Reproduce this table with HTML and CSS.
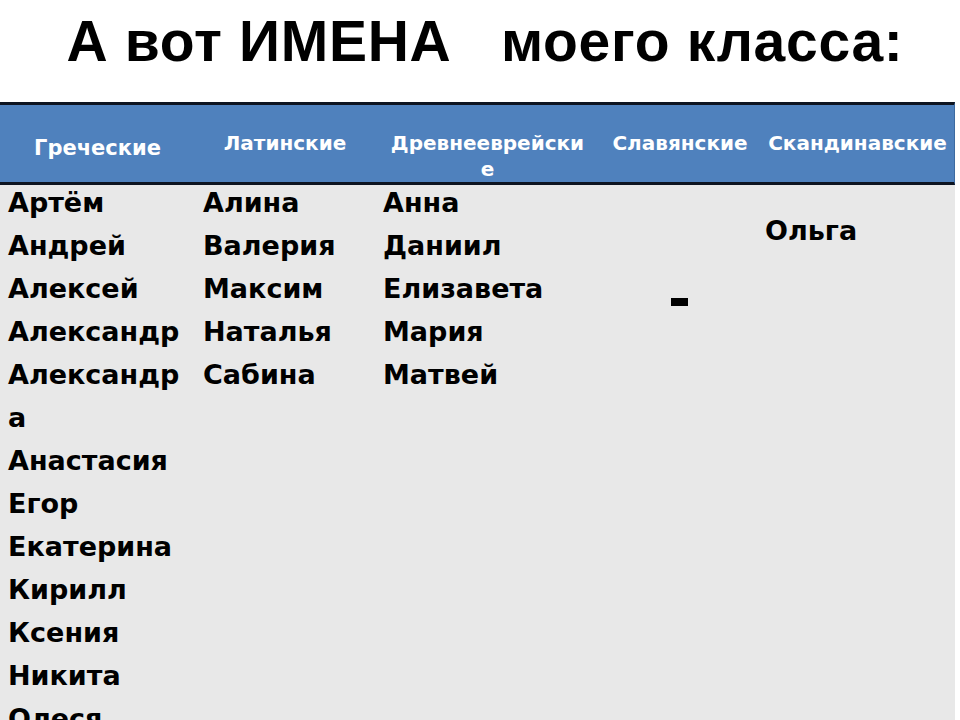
FILE: index.html
```html
<!DOCTYPE html>
<html lang="ru">
<head>
<meta charset="utf-8">
<title>А вот ИМЕНА моего класса</title>
<link rel="stylesheet" href="styles.css">
</head>
<body>
<div class="page">
  <header class="title-bar">
    <h1 class="title">А вот ИМЕНА&nbsp;&nbsp;&nbsp;моего класса:</h1>
  </header>
  <section class="table">
    <div class="head">
      <div class="th th-greek">Греческие</div>
      <div class="th">Латинские</div>
      <div class="th">Древнееврейски<br>е</div>
      <div class="th">Славянские</div>
      <div class="th">Скандинавские</div>
    </div>
    <div class="body">
      <ul class="col list col-1">
        <li>Артём</li>
        <li>Андрей</li>
        <li>Алексей</li>
        <li>Александр</li>
        <li>Александр<br>а</li>
        <li>Анастасия</li>
        <li>Егор</li>
        <li>Екатерина</li>
        <li>Кирилл</li>
        <li>Ксения</li>
        <li>Никита</li>
        <li>Олеся</li>
      </ul>
      <ul class="col list col-2">
        <li>Алина</li>
        <li>Валерия</li>
        <li>Максим</li>
        <li>Наталья</li>
        <li>Сабина</li>
      </ul>
      <ul class="col list col-3">
        <li>Анна</li>
        <li>Даниил</li>
        <li>Елизавета</li>
        <li>Мария</li>
        <li>Матвей</li>
      </ul>
      <div class="col col-4"><span class="dash" aria-label="-"></span></div>
      <ul class="col list col-5">
        <li>Ольга</li>
      </ul>
    </div>
  </section>
</div>
</body>
</html>
```
FILE: styles.css
```css
* { box-sizing: border-box; }
html, body {
  margin: 0;
  padding: 0;
  background: #ffffff;
}
body {
  font-family: "Liberation Sans", Arial, sans-serif;
  color: #000;
  width: 960px;
  height: 720px;
  overflow: hidden;
}
.page {
  display: flex;
  flex-direction: column;
  width: 960px;
}
.title-bar {
  height: 102px;
  display: flex;
  justify-content: center;
  align-items: flex-start;
  padding-top: 8px;
}
.title {
  margin: 0;
  font-size: 57px;
  font-weight: bold;
  line-height: 66px;
  white-space: nowrap;
  letter-spacing: 0.7px;
  margin-left: 10px;
}
.table {
  width: 955px;
  display: flex;
  flex-direction: column;
}
.head {
  display: grid;
  grid-template-columns: 195px 180px 225px 160px 195px;
  height: 83px;
  background: #4f81bd;
  border-top: 3px solid #0d1420;
  border-bottom: 3px solid #0d1420;
  border-right: 1px solid #3d6aa0;
}
.th {
  color: #fff;
  font-family: "DejaVu Sans", "Liberation Sans", sans-serif;
  font-weight: bold;
  font-size: 20px;
  line-height: 26px;
  text-align: center;
  padding-top: 25px;
  white-space: nowrap;
}
.th-greek {
  font-size: 21px;
  padding-top: 30px;
}
.body {
  display: grid;
  grid-template-columns: 195px 180px 225px 160px 195px;
  background: #e8e8e8;
  height: 540px;
}
.col {
  list-style: none;
  margin: 0;
  padding: 0;
  font-family: "DejaVu Sans", "Liberation Sans", sans-serif;
  font-weight: bold;
  font-size: 27px;
}
.list {
  margin-top: -4px;
}
.col li {
  line-height: 43px;
  white-space: nowrap;
}
.col-1 { padding-left: 8px; }
.col-2 { padding-left: 8px; }
.col-3 { padding-left: 8px; }
.col-4 {
  display: flex;
  justify-content: center;
  align-items: flex-start;
  padding-top: 113px;
}
.dash {
  display: block;
  width: 17px;
  height: 8px;
  background: #000;
  margin-left: -2px;
}
.col-5 {
  padding-left: 5px;
  padding-top: 28px;
}
```
